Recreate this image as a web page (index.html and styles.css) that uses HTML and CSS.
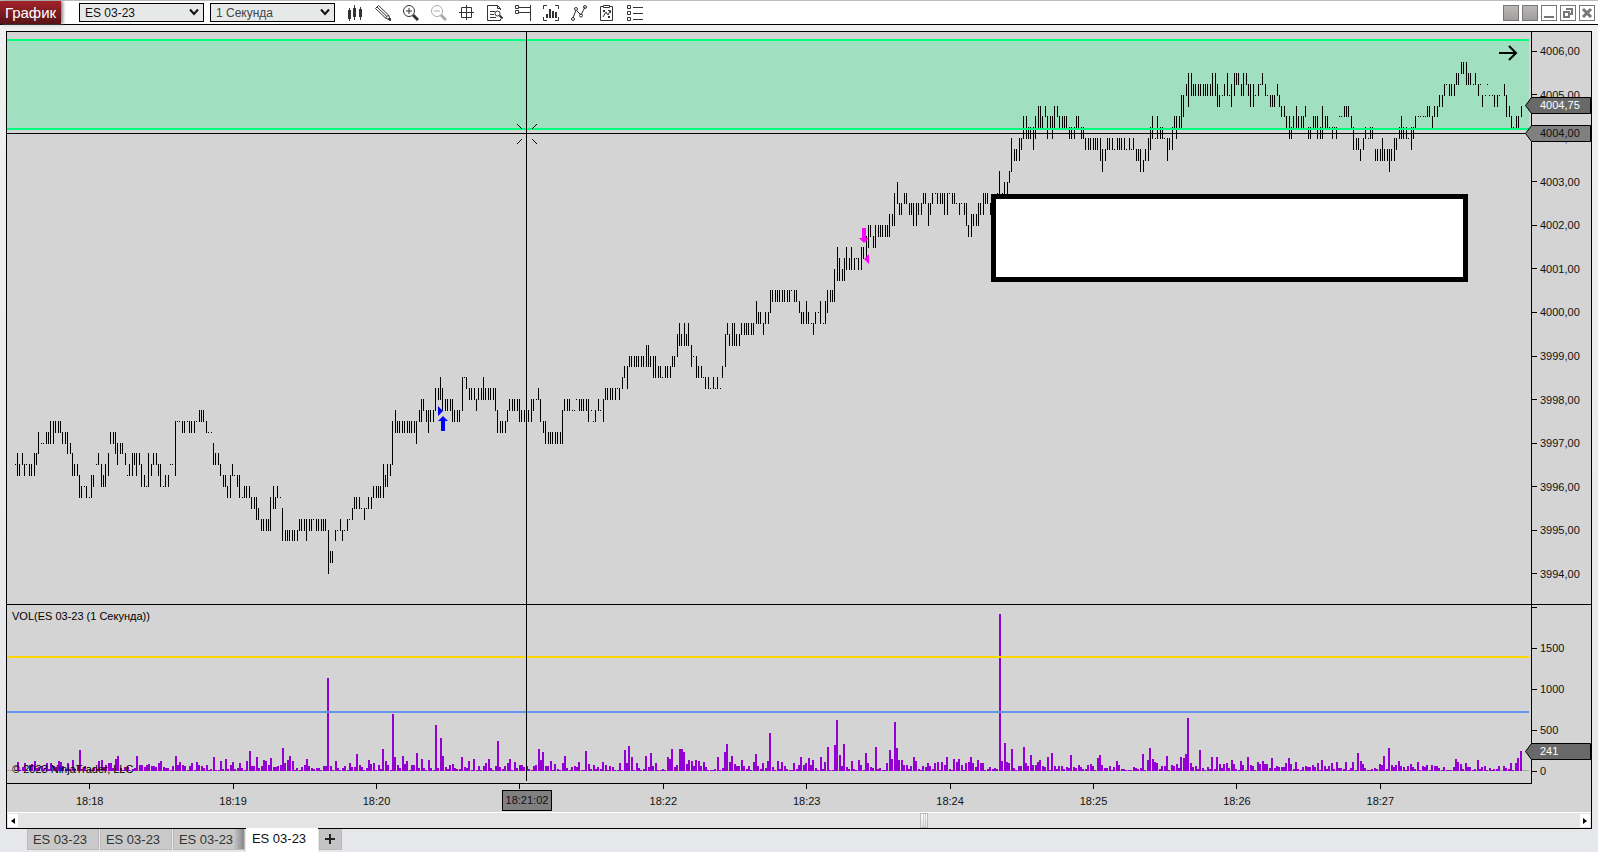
FILE: index.html
```html
<!DOCTYPE html>
<html lang="ru">
<head>
  <meta charset="UTF-8">
  <meta name="viewport" content="width=device-width, initial-scale=1">
  <title>График - ES 03-23</title>
  <link rel="stylesheet" href="styles.css">
</head>
<body>
<header class="toolbar">
  <h1 class="title">График</h1>
  <div class="picker">
    <select aria-label="Инструмент"><option>ES 03-23</option></select>
    <svg viewBox="0 0 10 8"><path d="M1 1.5 5 6 9 1.5"/></svg>
  </div>
  <div class="picker">
    <select class="interval" aria-label="Интервал"><option>1 Секунда</option></select>
    <svg viewBox="0 0 10 8"><path d="M1 1.5 5 6 9 1.5"/></svg>
  </div>
  <div class="tools">
    <button aria-label="Стиль графика"><svg viewBox="0 0 16 16"><path d="M2.5 3v13M7.5 0v15M13.5 2v13"/><path d="M2.5 5v9M7.5 3v9M13.5 4v8" stroke-width="3"/></svg></button>
    <button aria-label="Рисование"><svg viewBox="0 0 16 16"><path d="M.5 3.5 3.5.5M.5 3.5l10 9.500M3.500.5l10 9.500M2 2l10 9.500"/><path d="m10.500 13 3-3 2 5.500z"/><path d="m13 14 2-1 1 3z" fill="currentColor"/></svg></button>
    <button aria-label="Увеличить"><svg viewBox="0 0 16 16"><circle cx="6" cy="6" r="5.500"/><path d="M3 6h6M6 3v6"/><path d="m10 10 5 5" stroke-width="3"/></svg></button>
    <button aria-label="Уменьшить" disabled><svg viewBox="0 0 16 16"><circle cx="6" cy="6" r="5.500"/><path d="M3 6h6"/><path d="m10 10 5 5" stroke-width="3"/></svg></button>
    <button aria-label="Перекрестие"><svg viewBox="0 0 16 16"><path d="M2.500 2.500h10v10h-10zM7.500 0v15M0 7.500h15"/></svg></button>
    <button aria-label="Данные"><svg viewBox="0 0 16 16"><path d="M13.500 5V3.500L10.500.5h-10v15h13V14M10.500.5v3h3M3 6.500h5M3 9.500h4M3 12.500h6"/><circle cx="10.500" cy="8.500" r="2.500"/><path d="m12.500 10.500 3 3" stroke-width="2"/></svg></button>
    <button aria-label="Стратегии"><svg viewBox="0 0 16 16"><path d="M.5.5h3v3h-3zM.5 5.500h3v3h-3zM4 2.500h12M4 7.500h11M15.500 0v16"/></svg></button>
    <button aria-label="Индикаторы"><svg viewBox="0 0 16 16"><path d="M4 .5H.5V4M12 .5h3.500V4M.5 12v3.500H4M15.500 12v3.500H12"/><path d="M4 9v4M7 4v9M10 6v7M13 7v6" stroke-width="2"/></svg></button>
    <button aria-label="Линии"><svg viewBox="0 0 16 16"><path d="m2 13 3-8 5 5 4-8"/><circle cx="2" cy="14" r="1.500"/><circle cx="5" cy="4" r="1.500"/><circle cx="10" cy="10.500" r="1.500"/><circle cx="14" cy="2" r="1.500"/></svg></button>
    <button aria-label="Счет"><svg viewBox="0 0 16 16"><path d="M4 1.500H1.500v14h12v-14H11M4.500.5h6v2h-6zM4 5l2 2M6 5 4 7M9 11l2 2M11 11l-2 2M4 12l3-5 2 3 2-4M9 5.500h2.500V8"/></svg></button>
    <button aria-label="Свойства"><svg viewBox="0 0 16 16"><path d="M.5.5h3v3h-3zM.5 6.500h3v3h-3zM.5 12.500h3v3h-3zM6 2.500h10M6 8.500h10M6 14.500h10"/></svg></button>
  </div>
  <div class="window-buttons">
    <button class="link" aria-label="Связь инструмента"></button>
    <button class="link" aria-label="Связь интервала"></button>
    <button aria-label="Свернуть"><svg viewBox="0 0 14 14"><path d="M2 11h10" stroke-width="2"/></svg></button>
    <button aria-label="Развернуть"><svg viewBox="0 0 14 14"><path d="M5 3h6v5H8M3 6h5v5H3z" stroke-width="2"/></svg></button>
    <button aria-label="Закрыть"><svg viewBox="0 0 14 14"><path d="m3 3 8 8M11 3l-8 8" stroke-width="3"/></svg></button>
  </div>
</header>

<main class="chart">
  <section class="pane price">
    <svg class="plot" viewBox="0 0 1524 572" preserveAspectRatio="none">
      <rect class="zone" x="0" y="7" width="1522" height="91"/>
      <path id="bars" class="bars"/>
      <path class="zone-line" d="M0 8h1522M0 97h1522"/>
      <path class="cursor" d="M0 101.500h1520M519.500 0v572"/>
      <path class="cursor-mark" d="m510 92 5 5M530 92l-5 5M510 112l5-5M530 112l-5-5"/>
      <path class="buy" d="m431 374 5 5-5 5zM436 384l5 5h-3v10h-4v-10h-3z"/>
      <path class="sell" d="M855 196h4v10h3l-5 5-5-5h3zM862 222v10l-5-5z"/>
      <rect class="note" x="986.500" y="164.500" width="472" height="83"/>
      <path class="go-last" d="M1492 21h17M1502 14l7 7-7 7"/>
    </svg>
  </section>
  <aside class="scale price-scale">
    <ul>
      <li>4006,00</li><li>4005,00</li><li>4004,00</li><li>4003,00</li><li>4002,00</li>
      <li>4001,00</li><li>4000,00</li><li>3999,00</li><li>3998,00</li><li>3997,00</li>
      <li>3996,00</li><li>3995,00</li><li>3994,00</li>
    </ul>
    <div class="tag last"><svg viewBox="0 0 66 17"><path d="M.5 8.500 6.500.5h59v16h-59z"/></svg>4004,75</div>
    <div class="tag cross"><svg viewBox="0 0 66 17"><path d="M.5 8.500 6.500.5h59v16h-59z"/></svg>4004,00</div>
  </aside>

  <section class="pane volume">
    <svg class="plot" viewBox="0 0 1524 178" preserveAspectRatio="none">
      <path class="zero" d="M0 165.500h1522"/>
      <path id="volume" class="volume-bars"/>
      <path class="level-high" d="M0 52h1522"/>
      <path class="level-low" d="M0 107h1522"/>
      <path class="cursor" d="M519.500 0v176"/>
    </svg>
    <p class="caption">VOL(ES 03-23 (1 Секунда))</p>
    <p class="copyright">© 2023 NinjaTrader, LLC</p>
  </section>
  <aside class="scale volume-scale">
    <ul><li></li><li>1500</li><li>1000</li><li>500</li><li>0</li></ul>
    <div class="tag volume-last"><svg viewBox="0 0 66 17"><path d="M.5 8.500 6.500.5h59v16h-59z"/></svg>241</div>
  </aside>

  <div class="times">
    <ul>
      <li>18:18</li><li>18:19</li><li>18:20</li><li>18:21</li><li>18:22</li>
      <li>18:23</li><li>18:24</li><li>18:25</li><li>18:26</li><li>18:27</li>
    </ul>
    <div class="time-tag">18:21:02</div>
  </div>

  <div class="scrollbar">
    <button aria-label="Назад"><svg viewBox="0 0 4 6"><path d="M4 0v6L0 3z"/></svg></button>
    <div class="track"><div class="thumb"></div></div>
    <button aria-label="Вперед"><svg viewBox="0 0 4 6"><path d="M0 0v6l4-3z"/></svg></button>
  </div>
</main>

<nav class="tabs">
  <button>ES 03-23</button>
  <button>ES 03-23</button>
  <button class="before-active">ES 03-23</button>
  <button class="active">ES 03-23</button>
  <button class="add" aria-label="Добавить вкладку"><svg viewBox="0 0 10 10"><path d="M5 0v10M0 5h10"/></svg></button>
</nav>
<script src="chart.js"></script>
</body>
</html>
```
FILE: styles.css
```css
* {
  box-sizing: border-box;
}
body {
  margin: 0;
  height: 100vh;
  display: flex;
  flex-direction: column;
  overflow: hidden;
  font-family: "Liberation Sans", Arial, sans-serif;
  font-size: 11px;
  color: #111;
  background: linear-gradient(#f1f1f1, #ebedee 30%, #e5e7ea);
}
ul, p, h1 {
  margin: 0;
  padding: 0;
  list-style: none;
}
button {
  margin: 0;
  padding: 0;
  border: none;
  background: none;
  font: inherit;
  color: inherit;
}
svg {
  display: block;
}

/* toolbar */
.toolbar {
  flex: none;
  height: 25px;
  display: flex;
  align-items: center;
  background: #fff;
  border-top: 1px solid #bbb;
  border-bottom: 1px solid #000;
}
.title {
  width: 61px;
  height: 23px;
  margin-right: 18px;
  text-align: center;
  font-size: 15px;
  font-weight: normal;
  line-height: 23px;
  color: #fff;
  background: linear-gradient(#a32328, #581318);
  box-shadow: 2px 0 3px #888;
}
.picker {
  position: relative;
  margin-right: 6px;
}
.picker select {
  appearance: none;
  display: block;
  width: 125px;
  height: 19px;
  padding: 0 5px;
  border: 1px solid #000;
  border-radius: 0;
  background: #e7e9e8;
  font: 12px "Liberation Sans", Arial, sans-serif;
  color: #111;
}
.picker .interval {
  color: #444;
}
.picker svg {
  position: absolute;
  right: 5px;
  top: 5px;
  width: 10px;
  height: 8px;
  fill: none;
  stroke: #111;
  stroke-width: 2;
  pointer-events: none;
}
.tools {
  display: flex;
}
.tools button {
  width: 28px;
  height: 22px;
  display: flex;
  align-items: center;
  justify-content: center;
  color: #333;
}
.tools button:disabled {
  color: #aaa;
}
.tools svg {
  width: 16px;
  height: 16px;
  fill: none;
  stroke: currentColor;
}
.window-buttons {
  display: flex;
  gap: 3px;
  margin-left: auto;
  margin-right: 3px;
}
.window-buttons button {
  width: 16px;
  height: 16px;
  border: 1px solid #777;
}
.window-buttons .link {
  background: linear-gradient(#bcb8b8, #a19d9d);
}
.window-buttons svg {
  width: 14px;
  height: 14px;
  fill: none;
  stroke: #777;
}

/* chart */
.chart {
  flex: 1;
  min-height: 0;
  margin: 6px 6px 0;
  display: grid;
  grid-template-columns: 1fr 60px;
  grid-template-rows: 573fr 179fr 28px 16px;
  border: 1px solid #000;
  background: #d4d4d4;
}
.pane {
  position: relative;
  min-width: 0;
  min-height: 0;
}
.price, .price-scale {
  border-bottom: 1px solid #000;
}
.volume {
  border-bottom: 1px solid #000;
}
.plot {
  width: 100%;
  height: 100%;
  fill: none;
  shape-rendering: crispEdges;
}
.zone {
  fill: #a0dfc0;
}
.zone-line {
  stroke: #00ff7f;
  stroke-width: 2;
}
.bars, .cursor {
  stroke: #000;
}
.cursor-mark {
  stroke: #000;
  shape-rendering: auto;
}
.buy {
  fill: #00f;
  shape-rendering: auto;
}
.sell {
  fill: #f0f;
  shape-rendering: auto;
}
.note {
  fill: #fff;
  stroke: #000;
  stroke-width: 5;
}
.go-last {
  stroke: #000;
  stroke-width: 2;
  shape-rendering: auto;
}
.zero {
  stroke: #aaa;
}
.volume-bars {
  fill: #9400d3;
}
.level-high {
  stroke: #ffd700;
  stroke-width: 2;
}
.level-low {
  stroke: #6495ed;
  stroke-width: 2;
}
.caption, .copyright {
  position: absolute;
  left: 5px;
  line-height: 14px;
  color: #000;
}
.caption {
  top: 4px;
}
.copyright {
  bottom: 7px;
}

/* scales */
.scale {
  position: relative;
  min-height: 0;
  border-left: 1px solid #000;
}
.scale ul {
  height: 100%;
  display: flex;
  flex-direction: column;
  justify-content: space-between;
}
.price-scale ul {
  padding: 12px 0 23px;
}
.volume-scale {
  display: flex;
}
.volume-scale ul {
  height: auto;
  margin: -5px 0 6px;
}
.scale li {
  height: 14px;
  line-height: 14px;
  display: flex;
  align-items: center;
}
.scale li::before {
  content: "";
  width: 5px;
  height: 1px;
  margin-right: 3px;
  background: #000;
}
.tag {
  position: absolute;
  z-index: 1;
  left: -7px;
  width: 66px;
  height: 17px;
  padding-left: 15px;
  line-height: 17px;
  color: #fff;
}
.tag svg {
  position: absolute;
  left: 0;
  top: 0;
  z-index: -1;
  width: 66px;
  height: 17px;
  fill: #696969;
  stroke: #000;
}
.last {
  top: 65px;
}
.cross {
  top: 93px;
  color: #111;
}
.cross svg {
  fill: #808080;
}
.volume-last {
  bottom: 24px;
}

/* time axis */
.times {
  grid-column: 1 / 3;
  position: relative;
}
.times ul {
  display: grid;
  grid-template-columns: repeat(10, 1fr);
  padding: 0 139px 0 11px;
  text-align: center;
}
.times li::before {
  content: "";
  display: block;
  width: 1px;
  height: 5px;
  margin: 0 auto 5px;
  background: #000;
}
.times li {
  line-height: 15px;
}
.time-tag {
  position: absolute;
  left: 495px;
  top: 6px;
  width: 50px;
  height: 21px;
  border: 1px solid #000;
  background: #808080;
  line-height: 19px;
  text-align: center;
}

.scrollbar {
  grid-column: 1 / 3;
  display: flex;
  align-items: center;
  padding: 0 1px;
  border-top: 1px solid #fff;
  background: #e4e4e4;
}
.scrollbar button {
  width: 10px;
  height: 13px;
  display: flex;
  align-items: center;
  justify-content: center;
  background: #fff;
}
.scrollbar button svg {
  width: 4px;
  height: 6px;
}
.track {
  flex: 1;
  height: 15px;
  padding-right: 6px;
}
.thumb {
  width: 8px;
  height: 15px;
  margin-left: 58%;
  border: 1px solid #bbb;
  background: linear-gradient(90deg, transparent 2px, #ccc 2px 3px, transparent 3px 4px, #ccc 4px 5px, transparent 5px), linear-gradient(#fff, #ddd);
}

/* tabs */
.tabs {
  flex: none;
  height: 23px;
  display: flex;
  align-items: flex-start;
  gap: 1px;
  padding-left: 27px;
}
.tabs button {
  width: 72px;
  height: 21px;
  padding-right: 6px;
  border: 1px solid #bbb;
  border-top: none;
  background: #c9c9c9;
  font-size: 13px;
  color: #333;
}
.tabs .before-active {
  background: linear-gradient(90deg, #c9c9c9 85%, #888);
}
.tabs .active {
  height: 24px;
  margin-top: -1px;
  padding-bottom: 3px;
  border: none;
  background: #fff;
  color: #111;
  z-index: 1;
}
.tabs .add {
  width: 23px;
  padding: 0 2px 0 0;
  background: #c4c4c4;
}
.add svg {
  width: 10px;
  height: 10px;
  margin: auto;
  stroke: #222;
  stroke-width: 2;
}
```
FILE: chart.js
```js
// price bars: x:high-low, in ticks of 0,25 above 3994,00
const prices = `
15:10 17:11-9 19:10-9 22:11-10 24:10-9 26:10 29:10-9 31:10-9 34:11-9 36:11-10 38:13-11 41:12 43:12 46:13-12 48:13-12
50:14-12 53:14-12 55:14-13 58:14-13 60:14-13 62:13-12 65:13-12 67:13-11 70:12-11 72:11-9 74:10-9 77:10-9 79:9-7 81:8-7
84:8 86:8-7 89:7 91:9-7 93:9-8 96:10 98:11-10 101:10-8 103:9-8 105:10-8 108:11-9 110:13-12 113:13-12 115:13-11
117:12-10 120:12-11 122:12-11 125:11-10 127:9 129:10-9 132:11-9 134:11-10 136:11-9 139:11-10 141:10-8 144:9-8 146:8
148:11-8 151:10-9 153:11-10 156:11-10 158:10-9 160:10-8 163:8 165:9-8 168:9-8 170:10 172:10 175:14-9 177:14 179:14
182:14-13 184:14-13 187:14 189:14-13 191:14-13 194:14-13 196:14 199:15-14 201:15-14 203:15-14 206:14-13 208:13 211:13
213:12-10 215:11-10 218:11-10 220:10-9 223:9-8 225:9-8 227:8-7 230:9-7 232:10-9 234:9 237:9-8 239:9-7 242:7 244:8-7
246:8-7 249:8-7 251:7-6 254:7-6 256:7-5 258:6-5 261:5-4 263:5-4 266:5-4 268:5-4 270:7-4 273:8-6 275:7-6 277:8-7 280:7
282:6-3 285:4-3 287:4-3 289:4-3 292:4-3 294:4-3 297:4-3 299:5-4 301:5-4 304:5-4 306:5-3 309:5-4 311:5-4 313:5 316:5-4
318:5-4 321:5-4 323:5-4 325:5-4 328:4-0 330:2-1 332:2-1 335:4-3 337:4 340:5-4 342:4-3 344:4 347:5-4 349:5 352:6-5
354:7-6 356:7-6 359:7-6 361:6 364:6-5 366:6 368:7-6 371:7-6 373:8-7 376:8-7 378:8-7 380:8-7 383:10-7 385:9-8 387:10-8
390:10-9 392:14-10 395:15-13 397:14-13 399:14-13 402:14-13 404:14-13 407:14-13 409:14-13 411:14-13 414:14-13 416:14-12
419:15-14 421:16-14 423:16-15 426:15-14 428:15-13 430:15-14 433:15-14 435:17-15 438:17-16 440:18-16 442:17-15 445:16-15
447:16-15 450:16-15 452:16-14 454:15-14 457:15-14 459:15-14 462:18-15 464:18 466:18-17 469:17-16 471:17-16 474:17-16
476:16-15 478:17-16 481:17-16 483:18-16 485:17-16 488:17-16 490:17-16 493:17-16 495:17-15 497:15-13 500:14-13 502:14-13
505:14-13 507:15-14 509:16-15 512:16-15 514:16-15 517:16-15 519:16-14 521:15-14 524:15-14 526:15-14 528:15-14 531:16-14
533:16-15 536:16 538:17-16 540:16-14 543:14-13 545:14-12 548:13-12 550:13-12 552:13-12 555:13-12 557:13-12 560:13-12
562:15-12 564:16-15 567:16-15 569:16-15 572:15 574:15 576:16 579:16-15 581:16-15 583:16-15 586:16-15 588:16-14 591:15
593:14 595:15-14 598:16-15 600:15 603:16-14 605:17-16 607:17-16 610:17-16 612:17-16 615:17-16 617:17 619:17-16 622:18-17
624:19-18 627:19-17 629:20-19 631:20-19 634:20-19 636:20-19 638:20-19 641:20-19 643:20-19 646:21-19 648:21-19 650:20-19
653:20-18 655:20-18 658:19-18 660:19-18 662:18 665:19-18 667:19-18 670:19-18 672:20-19 674:20-19 677:22-20 679:23-21
681:22-21 684:23-21 686:22-21 688:23-21 691:21-19 693:20 696:20-18 698:19-18 701:19-18 703:18 705:18-17 708:18-17 710:17
713:18-17 715:17 717:18-17 720:17 722:19-18 725:22-19 727:23-22 729:22-21 732:23-21 734:23-21 736:22-21 739:22-21
741:23-22 744:23-22 746:23-22 748:23-22 751:23-22 753:23-22 756:25-23 758:24-23 760:24-23 763:23-22 765:24-23 768:24-23
770:26-24 772:26-25 775:26-25 777:26-25 779:26-25 782:26-25 784:26-25 787:26-25 789:26-25 791:26 794:26-25 796:26-25
799:25-24 801:24-23 803:24-23 806:25-23 808:24-23 811:23 813:23-22 815:24-23 818:24 820:25-23 823:23 825:25-23 827:26-24
830:26-25 832:26-25 834:28-25 837:30-27 839:29-27 842:28-27 844:29-27 846:30-28 849:29-28 851:30-28 854:29-28 856:29
858:29-28 861:30-28 863:30-29 866:31-29 868:32-30 870:32-31 873:31-30 875:32-30 878:32-31 880:32-31 882:32-31 885:32-31
887:32-31 889:33-31 892:33-32 894:35-32 897:36-34 899:34-33 901:34-33 904:35-34 906:35-34 909:34-33 911:34-33 913:34-32
916:34-32 918:34-33 921:34-33 923:35-34 925:35-34 928:34-32 930:34-33 932:35-34 935:35 937:35-34 940:35-34 942:35-34
944:35-33 947:35-33 949:35 952:35-34 954:35-34 956:34 959:34-33 961:34 964:34-33 966:34-32 968:32-31 971:33-31 973:33-32
976:33-32 978:34-32 980:34-33 983:35-33 985:35-34 987:35-34 990:34-33 997:35 999:37-35 1002:35 1004:36-35 1007:36-35
1009:37-36 1011:40-37 1014:39-38 1016:39-38 1019:40-38 1021:40-39 1023:42-40 1026:42-40 1028:41-40 1030:41-40 1033:41-39
1035:42-40 1038:43-41 1040:43-41 1042:42-41 1045:43-42 1047:42-40 1050:42-41 1052:42-40 1054:43-41 1057:43-42 1059:42-41
1062:42-41 1064:42-41 1066:42-41 1069:41-40 1071:41-40 1074:41-40 1076:42-41 1078:42-41 1081:41-40 1083:41-40 1085:40-39
1088:40-39 1090:40-39 1093:40-39 1095:40-39 1097:40-39 1100:40-38 1102:39-37 1105:39-38 1107:40-39 1109:40-39 1112:40-39
1114:39 1117:40-39 1119:40-39 1121:40-39 1124:40-39 1126:39 1129:40-39 1131:39 1133:40-39 1136:39-38 1138:39-38
1140:39-37 1143:38-37 1145:39-38 1148:40-38 1150:41-39 1152:42-40 1155:40 1157:42-40 1160:41-40 1162:41-40 1164:40
1167:40-38 1169:40-39 1172:41-39 1174:42-41 1176:42-40 1179:42-41 1181:44-41 1183:44-42 1186:45-44 1188:46-43 1191:46-44
1193:45-44 1195:45-44 1198:45-44 1200:45-44 1203:45-44 1205:45-44 1207:45-44 1210:45-44 1212:46-44 1215:46-44 1217:45-43
1219:44-43 1222:44 1224:45-44 1227:46-44 1229:44 1231:45-43 1234:46-44 1236:46-45 1238:46-45 1241:45-44 1243:46-44
1246:46-45 1248:45-44 1250:45-43 1253:45-43 1255:44 1258:45-44 1260:45 1262:46-45 1265:45-44 1267:44 1270:44-43
1272:44-43 1274:44-43 1277:45-44 1279:44-43 1281:43-42 1284:43-42 1286:42-41 1289:42-40 1291:41-40 1293:42-41 1296:43-41
1298:42-41 1301:42-41 1303:42-41 1305:43-42 1308:41-40 1310:41-40 1313:42-41 1315:42-41 1317:42-40 1320:41-40 1322:43-40
1325:42-41 1327:42-41 1329:41 1332:41-40 1334:41 1336:41-40 1339:42 1341:42 1344:43-42 1346:43-42 1348:43-42 1351:42-41
1353:41-39 1356:40-39 1358:40-39 1360:39-38 1363:40-39 1365:41-40 1368:40 1370:41-40 1372:41-40 1375:39-38 1377:39-38
1380:39-38 1382:40-38 1384:39-38 1387:39-38 1389:39-37 1391:39-38 1394:40-38 1396:40-39 1399:41-40 1401:42-40 1403:41-40
1406:41-40 1408:40 1411:41-39 1413:41-40 1415:42-41 1418:42 1420:42 1423:42 1425:42 1427:43-42 1429:43-42 1432:42-41
1434:43-42 1437:43-42 1439:44-43 1442:44-43 1444:45-44 1446:45 1449:45-44 1451:45-44 1454:45-44 1456:46-45 1458:46-45
1461:47-46 1463:47-46 1466:47-45 1468:46-45 1470:46-45 1473:45 1475:46-45 1478:45-44 1480:45 1482:44-43 1485:44 1487:45
1489:44 1492:44 1494:44-43 1497:44-43 1499:44 1504:45-44 1506:44-42 1509:43-42 1511:42-41 1513:41 1516:42-41 1518:42-41
1521:43-42`;

let d = '';
for (const item of prices.trim().split(/\s+/)) {
  const [x, range] = item.split(':');
  const [high, low] = range.split('-').map(Number);
  const top = Math.round(541 - high * 10.87);
  const bottom = Math.round(541 - (low === undefined ? high : low) * 10.87) + 1;
  d += `M${x - 6.5} ${top}V${bottom}`;
}
document.getElementById('bars').setAttribute('d', d);

// volume bar heights, one per second, each row starts at its own second
const volumes = {
  0: [1,9,1,4,8,1,6,7,10,3,4,5,2,8,2,8,5,4,10,9,5,2,8,2,11,2,5,21,2,5,1,2,1,3,2,10,11,4,6,8,8,3,12,15,3,1,4,4,1,2],
  50: [3,15,6,6,4,6,7,5,5,4,8,10,4,3,3,1,5,15,6,9,6,5,1,5,8,1,9,6,5,3,6,1,2,14,1,1,10,2,12,2,6,9,2,3,8,3,1,10,20,5],
  100: [5,14,3,5,11,10,6,13,4,4,5,6,23,8,11,15,10,1,3,1,4,6,12,5,3,2,3,3,1,5,5,93,5,1,10,3,1,3,5,1,8,4,4,17,6,4,1,3,11,7],
  150: [8,1,6,2,22,10,6,1,57,14,6,3,15,7,10,1,6,6,18,3,12,3,1,11,3,1,46,3,33,15,4,2,6,7,3,2,2,14,4,3,10,1,12,1,5,1,5,8,12,3],
  200: [1,5,30,4,2,5,8,12,1,9,3,6,6,4,5,2,1,5,6,22,11,19,5,5,10,1,7,2,1,8,15,3,1,4,5,4,9,1,1,20,7,2,6,2,4,2,9,6,1,5],
  250: [4,1,1,8,1,21,8,25,14,1,8,3,1,2,15,4,18,5,8,1,1,2,1,14,12,22,4,6,22,22,19,7,11,10,5,11,10,5,9,4,1,1,1,2,14,1,3,19,27,9],
  300: [15,7,5,5,11,5,2,5,1,9,17,5,2,8,3,10,38,4,1,10,2,9,5,2,1,1,8,2,6,14,6,8,13,6,11,3,1,14,2,9,24,1,1,26,51,16,5,27,4,2],
  350: [10,2,1,11,6,1,18,8,4,3,24,2,3,1,1,8,21,12,49,23,11,11,6,6,2,5,14,10,2,1,5,4,8,5,2,8,9,1,9,6,14,2,1,12,9,12,6,1,8,9],
  400: [14,8,4,11,8,8,1,2,4,2,3,2,157,10,28,9,8,22,3,1,5,5,24,8,5,16,6,6,9,11,5,4,14,1,18,5,2,5,5,2,4,3,16,4,3,6,4,2,2,6],
  450: [7,5,1,13,16,6,3,3,5,1,4,10,6,2,2,1,1,1,4,3,2,3,17,1,11,23,12,9,8,2,5,5,15,1,6,5,7,3,14,13,17,53,8,4,5,2,21,3,1,4],
  500: [2,14,2,14,7,3,7,8,3,11,7,2,1,10,6,1,14,6,5,1,9,7,10,7,7,3,13,3,5,4,4,4,8,13,7,2,9,2,1,4,5,4,4,6,4,8,1,11,5,2],
  550: [5,8,2,9,3,3,2,9,1,3,9,1,18,10,7,3,1,1,2,3,2,7,6,15,2,23,6,4,6,10,5,4,1,5,7,4,2,9,1,5,4,6,1,6,5,5,3,1,4,1],
  600: [1,1,4,12,9,7,2,8,4,4,1,2,11,2,4,5,1,3,1,2,2,5,0,5,3,2,8,1,8,13,20]
};

d = '';
for (const start in volumes) {
  volumes[start].forEach((h, i) => {
    const x = Math.floor(8 + (Number(start) + i) * 2.389);
    d += `M${x} 166v${-h}h2v${h}z`;
  });
}
document.getElementById('volume').setAttribute('d', d);
```
